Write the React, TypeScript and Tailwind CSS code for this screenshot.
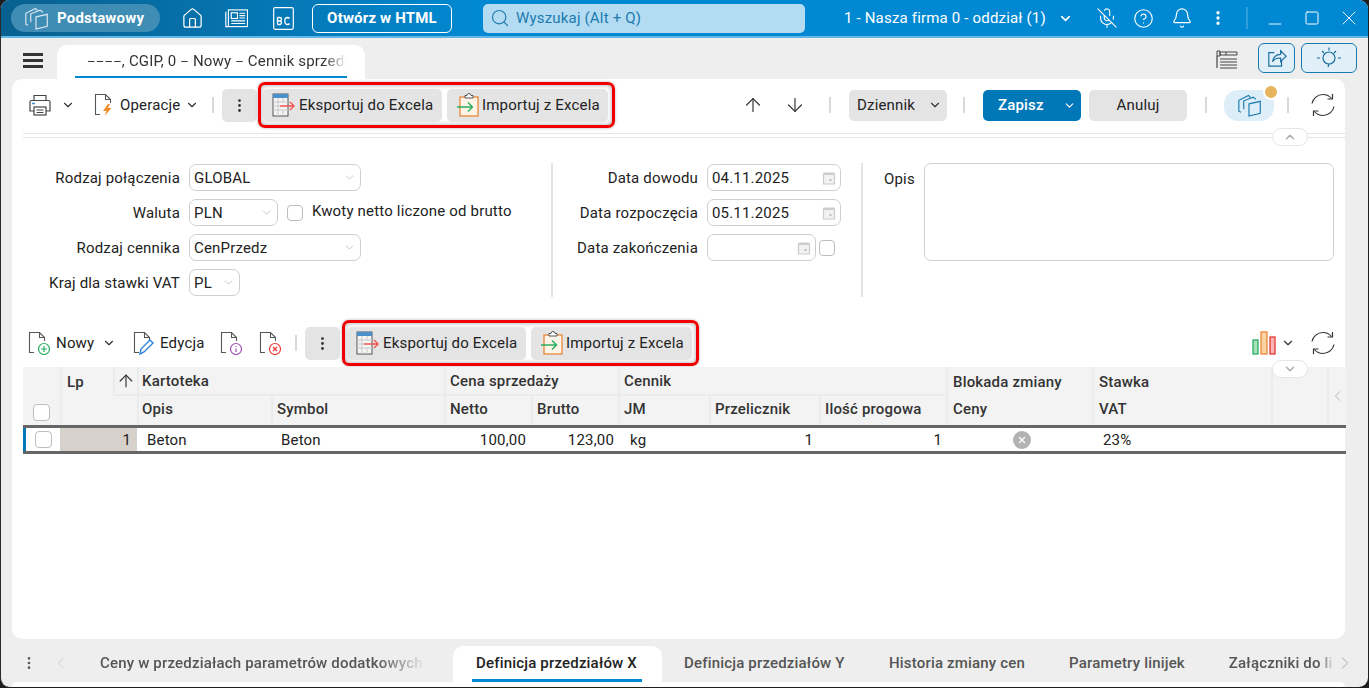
import React from "react";
import { ArrowDown, ArrowUp, Bell, ChevronDown, ChevronLeft, ChevronRight, ChevronUp, CircleHelp, EllipsisVertical, House, MicOff, Minus, Search, Square, X } from "lucide-react";

type IconProps = { className?: string };

// stacked cards icon used in the header pill and the toolbar
function CardsIcon({ className }: IconProps) {
  return (
    <svg viewBox="0 0 22 22" fill="none" stroke="currentColor" strokeWidth="1.1" className={className}>
      <path d="M10.500 9.500L21.300 7v11.500L10.500 21z" />
      <path d="M2.800 17.500L.8 16.500V6L10 1.500l2 2" />
      <path d="M5.500 14.500V6.500L14.500 3l2.500 2" />
    </svg>
  );
}

function NewsIcon() {
  return (
    <svg viewBox="0 0 24 22" fill="none" stroke="white" strokeWidth="1.2" className="h-[21px] w-[23px]">
      <rect x="3.5" y="2" width="20" height="17.5" />
      <path d="M.8 4v15.5h2.7" />
      <rect x="6.5" y="5" width="6.5" height="6" />
      <path d="M15 5.5h6M15 8h6M15 10.5h6M6.5 13.5h14.5M6.5 16.2h14.5" />
    </svg>
  );
}

function BcIcon() {
  return (
    <svg viewBox="0 0 21 23" fill="none" stroke="white" strokeWidth="1.2" className="h-[23px] w-[21px]">
      <rect x=".7" y=".7" width="19.6" height="21.6" rx="1.5" />
      <path d="M4.500 10.500v7M4.500 10.500h2.200a1.700 1.700 0 0 1 0 3.500H4.500M4.500 14h2.600a1.800 1.800 0 0 1 0 3.500H4.500M16.500 11.500a2.600 2.600 0 0 0-1.900-1c-1.600 0-2.800 1.400-2.800 3.500s1.200 3.500 2.800 3.500a2.600 2.600 0 0 0 1.900-1" strokeWidth="1.3" />
    </svg>
  );
}

function PrinterIcon() {
  return (
    <svg viewBox="0 0 24 24" fill="none" stroke="#444" strokeWidth="1.2" className="h-[26px] w-[24px]">
      <path d="M6 8V2.500h12V8" />
      <path d="M6 18H2V9a1.500 1.500 0 0 1 1.500-1.500h17A1.500 1.500 0 0 1 22 9v9h-4" />
      <rect x="6" y="14" width="12" height="8" />
      <path d="M8.500 17h7M8.500 19.500h7" />
      <path d="M4 10.500h3" stroke="#3b8fd0" strokeWidth="1.6" />
    </svg>
  );
}

// document outline with a folded corner, the small part sits bottom right
function DocIcon({ children }: { children: React.ReactNode }) {
  return (
    <svg viewBox="0 0 24 24" fill="none" className="h-[24px] w-[24px]">
      <path d="M7 21.500H2.500V1.500h10l5 5V10M12.500 1.500v5h5" stroke="#555" strokeWidth="1.1" />
      {children}
    </svg>
  );
}

function ExportIcon() {
  return (
    <svg viewBox="0 0 24 24" fill="none" className="h-[24px] w-[24px] shrink-0">
      <rect x="1" y="1" width="15" height="22" fill="#f4f4f4" stroke="#555" />
      <rect x="1" y="1" width="15" height="4" fill="#4b8fcb" />
      <path d="M1 9h15M1 13h7M1 17h15M6 5v18M11 5v4M11 17v6" stroke="#c8c8c8" />
      <path d="M8 13h14M18 9l4 4-4 4" stroke="#ef5350" strokeWidth="1.4" />
    </svg>
  );
}

function ImportIcon() {
  return (
    <svg viewBox="0 0 24 24" fill="none" className="h-[24px] w-[24px] shrink-0">
      <rect x="4" y="4" width="18" height="19" fill="#fdf3e7" stroke="#e8883a" strokeWidth="1.3" />
      <path d="M9 5V2.500h2a2 2 0 0 1 4 0h2V5z" fill="white" stroke="#555" />
      <path d="M1 14h15M12 9.500l4.500 4.500-4.500 4.500" stroke="#27ae60" strokeWidth="1.4" />
    </svg>
  );
}

function RefreshIcon() {
  return (
    <svg viewBox="0 0 24 24" fill="none" stroke="#333" strokeWidth="1.2" className="h-[24px] w-[24px]">
      <path d="M1 10.500C2 5.500 6.500 1.500 12 1.500c3.500 0 6.500 1.500 8.500 4" />
      <path d="M21.500 1v5h-5" />
      <path d="M23 13.500C22 18.500 17.500 22.500 12 22.500c-3.500 0-6.500-1.500-8.500-4" />
      <path d="M2.500 23v-5h5" />
    </svg>
  );
}

function Sep({ className = "" }: IconProps) {
  return <div className={`h-[16px] w-[2px] shrink-0 bg-[#d9d9d9] ${className}`} />;
}

function KebabBtn() {
  return (
    <div className="flex h-[33px] w-[35px] shrink-0 items-center justify-center rounded-[5px] bg-[#e4e4e4]">
      <EllipsisVertical className="h-[17px] w-[17px] text-[#333]" />
    </div>
  );
}

// the two excel actions with the red frame drawn around them in the picture
function ExcelActions({ className = "" }: IconProps) {
  return (
    <div className={`flex h-[46px] w-[357px] shrink-0 items-center gap-[5px] rounded-[7px] border-[3px] border-[#f00000] pl-[2px] shadow-[0_0_3px_rgba(0,0,0,0.3),inset_0_0_5px_rgba(0,0,0,0.35)] ${className}`}>
      <div className="flex h-[33px] w-[179px] items-center gap-[3px] rounded-[5px] bg-[#e4e4e4] pl-[9px]">
        <ExportIcon />
        <span>Eksportuj do Excela</span>
      </div>
      <div className="flex h-[33px] w-[161px] items-center gap-[2px] rounded-[5px] bg-[#e4e4e4] pl-[9px]">
        <ImportIcon />
        <span>Importuj z Excela</span>
      </div>
    </div>
  );
}

function Chevron({ className = "" }: IconProps) {
  return <ChevronDown strokeWidth={2} className={`h-[14px] w-[14px] text-[#333] ${className}`} />;
}

function Select({ value, width }: { value: string; width: string }) {
  return (
    <div className={`flex h-[27px] items-center justify-between rounded-[7px] border border-[#cfcfcf] px-[4px] ${width}`}>
      <span className="pt-[1px]">{value}</span>
      <ChevronDown strokeWidth={1.2} className="h-[13px] w-[13px] text-[#aaa]" />
    </div>
  );
}

function Check({ className = "" }: IconProps) {
  return <div className={`h-[16px] w-[16px] shrink-0 rounded-[4px] border border-[#bdbdbd] bg-white ${className}`} />;
}

function CalendarIcon() {
  return (
    <svg viewBox="0 0 14 14" className="h-[14px] w-[14px]" fill="none">
      <path d="M1.500 3h11v10h-11z" stroke="#ccc" strokeWidth="1.2" fill="#f2f2f2" />
      <path d="M1.500 1.500h11V4h-11z" fill="#ccc" />
      <rect x="7.500" y="8" width="2" height="2" fill="#bbb" />
    </svg>
  );
}

function DateField({ value, width }: { value?: string; width: string }) {
  return (
    <div className={`flex h-[27px] items-center justify-between rounded-[7px] border border-[#cfcfcf] px-[4px] ${width}`}>
      <span className="pt-[1px]">{value}</span>
      <CalendarIcon />
    </div>
  );
}

function Label({ children }: { children: React.ReactNode }) {
  return <span className="whitespace-nowrap pt-[1px] text-right">{children}</span>;
}

function HeadCell({ children, className = "" }: { children?: React.ReactNode; className?: string }) {
  return (
    <div className={`flex items-center border-l-2 border-[#ebebeb] font-medium text-[#333] ${className}`}>
      {children}
    </div>
  );
}

function BodyCell({ children, className = "" }: { children?: React.ReactNode; className?: string }) {
  return <div className={`flex h-[23px] items-center whitespace-nowrap pt-[1px] ${className}`}>{children}</div>;
}

export default function App() {
  return (
    <div className="h-[688px] w-[1369px] overflow-hidden bg-[#1e1e1e]">
      <div className="flex h-[687px] w-[1368px] flex-col overflow-hidden rounded-[9px] border-l border-[#2b2b2b] bg-[#eeeeee] font-['Roboto',sans-serif] text-[15px] tracking-[0.18px] text-[#222]">
        {/* title bar */}
        <header className="flex h-[38px] shrink-0 items-center border-b-2 border-[#62b6e6] bg-gradient-to-r from-[#08608f] to-[#0089d2] to-35% pl-[10px] text-white">
          <div className="flex h-[28px] w-[149px] items-center rounded-full bg-[#3f8db5] pl-[14px]">
            <CardsIcon className="h-[23px] w-[23px] text-[#dbe9f2]" />
            <span className="ml-[9px] font-bold">Podstawowy</span>
          </div>
          <House strokeWidth={1.3} className="ml-[21px] h-[23px] w-[23px]" />
          <div className="ml-[21px]"><NewsIcon /></div>
          <div className="ml-[25px]"><BcIcon /></div>
          <div className="ml-[18px] flex h-[29px] w-[140px] items-center justify-center rounded-[6px] border border-white font-bold">
            Otwórz w HTML
          </div>
          <div className="ml-[31px] flex h-[29px] w-[322px] items-center rounded-[5px] bg-[#b3dcf2] pl-[7px] text-[#1b7ab0]">
            <Search strokeWidth={1.4} className="h-[20px] w-[20px]" />
            <span className="ml-[6px]">Wyszukaj (Alt + Q)</span>
          </div>
          <span className="ml-[39px] w-[201px] whitespace-nowrap">1 - Nasza firma 0 - oddział (1)</span>
          <ChevronDown strokeWidth={2.5} className="ml-[13px] h-[15px] w-[15px]" />
          <MicOff strokeWidth={1.2} className="ml-[23px] h-[22px] w-[22px]" />
          <CircleHelp strokeWidth={1.3} className="ml-[15px] h-[21px] w-[21px]" />
          <Bell strokeWidth={1.3} className="ml-[17px] h-[22px] w-[22px]" />
          <EllipsisVertical strokeWidth={2.4} className="ml-[16px] h-[18px] w-[18px]" />
          <div className="ml-[19px] h-[22px] w-[2px] bg-[#2e9fdc]" />
          <Minus strokeWidth={1.1} className="ml-[17px] mt-[12px] h-[20px] w-[20px]" />
          <Square strokeWidth={1.5} className="ml-[19px] h-[16px] w-[16px]" />
          <X strokeWidth={0.9} className="ml-[17px] h-[24px] w-[24px]" />
        </header>

        {/* document tab row */}
        <div className="flex h-[41px] shrink-0 items-end">
          <div className="mb-[11px] ml-[22px] flex w-[20px] flex-col gap-[3px]">
            <div className="h-[3px] bg-[#333]" />
            <div className="h-[3px] bg-[#333]" />
            <div className="h-[3px] bg-[#333]" />
          </div>
          <div className="ml-[14px] flex h-[34px] w-[308px] flex-col rounded-t-[10px] bg-white pl-[18px]">
            <div className="h-[31px] w-[272px] overflow-hidden whitespace-nowrap pl-[12px] pt-[5px] text-[#333] [mask-image:linear-gradient(to_left,transparent,black_24px)]">
              <span className="text-[13px]">––––</span>, CGIP, 0 <span className="text-[13px]">–</span> Nowy <span className="text-[13px]">–</span> Cennik sprzedaży
            </div>
            <div className="h-[2px] w-[272px] bg-[#0089d2]" />
          </div>
          <div className="mb-[6px] ml-auto flex items-center">
            <svg viewBox="0 0 22 20" fill="none" stroke="#444" className="mb-[-3px] h-[20px] w-[22px]">
              <path d="M1 1h3v5H1zM4 2h17v3H4zM10 2v3" />
              <path d="M4 9h17M4 12h17M4 15h17M4 18h17M1 6v12" strokeWidth="1.2" />
            </svg>
            <div className="ml-[20px] flex h-[30px] w-[37px] items-center justify-center rounded-[6px] border border-[#1a7ab0] bg-[#e0eff8]">
              <svg viewBox="0 0 22 22" fill="none" stroke="#1a6f9f" strokeWidth="1.3" className="h-[20px] w-[20px]">
                <path d="M8 5H2v15h14v-6" />
                <path d="M6 15c1-5 4-8 9-8V3l6 6-6 6v-4c-4 0-7 1-9 4z" />
              </svg>
            </div>
            <div className="ml-[6px] mr-[11px] flex h-[30px] w-[56px] items-center justify-center rounded-[6px] border border-[#1a7ab0] bg-[#e0eff8]">
              <svg viewBox="0 0 26 24" fill="none" stroke="#1a6f9f" strokeWidth="1.2" className="h-[24px] w-[26px]">
                <circle cx="13" cy="12" r="6" />
                <path d="M13 18l-1 3M13 1.500v3M4 12H1M25 12h-3M6 5l2 2M20 5l-2 2" />
              </svg>
            </div>
          </div>
        </div>

        {/* main card */}
        <main className="relative ml-[11px] flex h-[560px] w-[1333px] shrink-0 flex-col rounded-[10px] bg-white pl-[11px]">
          <div className="flex h-[54px] shrink-0 items-center pb-[2px]">
            <div className="ml-[5px]"><PrinterIcon /></div>
            <Chevron className="ml-[9px]" />
            <div className="ml-[18px]">
              <DocIcon>
                <path d="M15 11l-5 7h3.500l-2 5 7-8h-3.500l2-4z" fill="#f28c28" />
              </DocIcon>
            </div>
            <span className="ml-[3px] w-[60px]">Operacje</span>
            <Chevron className="ml-[5px]" />
            <Sep className="ml-[13px]" />
            <div className="ml-[8px]"><KebabBtn /></div>
            <ExcelActions className="ml-[1px]" />
            <ArrowUp strokeWidth={1.3} className="ml-[127px] h-[22px] w-[22px] text-[#333]" />
            <ArrowDown strokeWidth={1.3} className="ml-[20px] h-[22px] w-[22px] text-[#333]" />
            <Sep className="ml-[23px]" />
            <div className="ml-[18px] flex h-[31px] w-[98px] items-center justify-between rounded-[5px] bg-[#e4e4e4] pl-[8px] pr-[5px]">
              <span>Dziennik</span>
              <Chevron />
            </div>
            <Sep className="ml-[16px]" />
            <div className="ml-[18px] flex h-[31px] w-[98px] items-center justify-between rounded-[5px] bg-[#0077b6] pl-[15px] pr-[5px] font-medium text-white">
              <span>Zapisz</span>
              <ChevronDown strokeWidth={2} className="h-[13px] w-[13px]" />
            </div>
            <div className="ml-[8px] flex h-[31px] w-[98px] items-center justify-center rounded-[5px] bg-[#e4e4e4]">Anuluj</div>
            <Sep className="ml-[18px]" />
            <div className="relative ml-[17px] flex h-[31px] w-[50px] items-center justify-center rounded-[14px] bg-[#deeef8]">
              <CardsIcon className="h-[23px] w-[23px] text-[#1a7ab0]" />
              <div className="absolute right-[-5px] top-[-6px] box-content h-[12px] w-[12px] rounded-full border-2 border-white bg-[#e5b45c]" />
            </div>
            <Sep className="ml-[13px]" />
            <div className="ml-[22px]"><RefreshIcon /></div>
          </div>

          {/* collapse bar */}
          <div className="relative mr-[-1px] h-[5px] shrink-0 border-y border-[#e6e6e6]">
            <div className="absolute left-[1249px] top-[-6px] flex h-[18px] w-[36px] items-center justify-center rounded-full border border-[#e6e6e6] bg-white">
              <ChevronUp strokeWidth={2.4} className="h-[14px] w-[14px] text-[#aaa]" />
            </div>
          </div>

          {/* form */}
          <div className="mt-[25px] flex h-[134px] shrink-0">
            <div className="w-[530px] border-r-2 border-[#e4e4e4] pt-[1px]">
              <div className="grid grid-cols-[157px_auto] items-center justify-start gap-x-[9px] gap-y-[8px]">
                <Label>Rodzaj połączenia</Label>
                <Select value="GLOBAL" width="w-[172px]" />
                <Label>Waluta</Label>
                <div className="flex items-center">
                  <Select value="PLN" width="w-[89px]" />
                  <Check className="ml-[9px]" />
                  <span className="ml-[9px] -mt-[2px] whitespace-nowrap">Kwoty netto liczone od brutto</span>
                </div>
                <Label>Rodzaj cennika</Label>
                <Select value="CenPrzedz" width="w-[172px]" />
                <Label>Kraj dla stawki VAT</Label>
                <Select value="PL" width="w-[51px]" />
              </div>
            </div>
            <div className="w-[310px] border-r-2 border-[#e4e4e4] pt-[1px]">
              <div className="grid grid-cols-[145px_auto] items-center justify-start gap-x-[9px] gap-y-[8px]">
                <Label>Data dowodu</Label>
                <DateField value="04.11.2025" width="w-[134px]" />
                <Label>Data rozpoczęcia</Label>
                <DateField value="05.11.2025" width="w-[134px]" />
                <Label>Data zakończenia</Label>
                <div className="flex items-center gap-[3px]">
                  <DateField width="w-[109px]" />
                  <Check />
                </div>
              </div>
            </div>
            <div className="ml-[21px] flex">
              <span className="mt-[5px] w-[31px]">Opis</span>
              <div className="ml-[9px] h-[98px] w-[410px] rounded-[7px] border border-[#cfcfcf]" />
            </div>
          </div>

          {/* grid toolbar */}
          <div className="mt-[23px] flex h-[46px] shrink-0 items-center">
            <div className="ml-[4px]">
              <DocIcon>
                <circle cx="17" cy="18" r="5.500" stroke="#27ae60" strokeWidth="1.2" fill="white" />
                <path d="M14 18h6M17 15v6" stroke="#27ae60" strokeWidth="1.2" />
              </DocIcon>
            </div>
            <span className="ml-[5px] w-[38px]">Nowy</span>
            <Chevron className="ml-[8px]" />
            <div className="ml-[16px]">
              <DocIcon>
                <path d="M8 23l1-5 9-9 3 3-9 9z" stroke="#2b82d9" strokeWidth="1.4" fill="white" />
              </DocIcon>
            </div>
            <span className="ml-[4px] w-[44px]">Edycja</span>
            <div className="ml-[15px]">
              <DocIcon>
                <circle cx="17" cy="18" r="5.500" stroke="#a34fb5" strokeWidth="1.2" fill="white" />
                <path d="M17 17.500v3.500M17 15v1" stroke="#a34fb5" strokeWidth="1.2" />
              </DocIcon>
            </div>
            <div className="ml-[15px]">
              <DocIcon>
                <circle cx="17" cy="18" r="5.500" stroke="#e53935" strokeWidth="1.2" fill="white" />
                <path d="M15 16l4 4M19 16l-4 4" stroke="#e53935" strokeWidth="1.2" />
              </DocIcon>
            </div>
            <Sep className="ml-[13px]" />
            <div className="ml-[8px]"><KebabBtn /></div>
            <ExcelActions className="ml-[2px]" />
            <svg viewBox="0 0 24 24" className="ml-[553px] h-[24px] w-[24px]" fill="none" strokeWidth="1.300">
              <rect x="1" y="9" width="5" height="14" fill="#a8e0bb" stroke="#27ae60" />
              <rect x="9" y="1" width="6" height="22" fill="#fbd2a4" stroke="#e8883a" />
              <rect x="18" y="6" width="5" height="17" fill="#f9b4b4" stroke="#e53935" />
            </svg>
            <Chevron className="ml-[5px] h-[12px] w-[12px]" />
            <div className="ml-[16px]"><RefreshIcon /></div>
          </div>

          {/* grid */}
          <div className="relative mt-[1px] w-[1323px] shrink-0">
            <div className="absolute left-[1249px] top-[-7px] z-10 flex h-[18px] w-[36px] items-center justify-center rounded-full border border-[#e6e6e6] bg-white">
              <ChevronDown strokeWidth={2.4} className="h-[14px] w-[14px] text-[#aaa]" />
            </div>
            <div className="grid h-[58px] grid-cols-[37px_53px_24px_134px_173px_87px_87px_91px_110px_127px_146px_179px_56px_19px] grid-rows-[29px_29px] bg-[#f3f3f3]">
              <HeadCell className="col-start-1 row-span-2 row-start-1 items-end justify-center !border-l-0 pb-[4px]"><Check className="h-[17px] w-[17px]" /></HeadCell>
              <HeadCell className="col-start-2 row-start-1 pl-[5px] pt-[2px]">Lp</HeadCell>
              <HeadCell className="col-start-3 row-start-1 justify-center border-b-2"><ArrowUp strokeWidth={1.4} className="h-[20px] w-[20px]" /></HeadCell>
              <HeadCell className="col-span-2 col-start-4 row-start-1 border-b-2 pl-[3px] pt-[2px]">Kartoteka</HeadCell>
              <HeadCell className="col-span-2 col-start-6 row-start-1 border-b-2 pl-[4px] pt-[2px]">Cena sprzedaży</HeadCell>
              <HeadCell className="col-span-3 col-start-8 row-start-1 border-b-2 pl-[4px] pt-[2px]">Cennik</HeadCell>
              <HeadCell className="col-start-11 row-start-1 pl-[5px] pt-[2px]">Blokada zmiany</HeadCell>
              <HeadCell className="col-start-12 row-start-1 pl-[5px] pt-[2px]">Stawka</HeadCell>
              <HeadCell className="col-start-13 row-span-2 row-start-1" />
              <HeadCell className="col-start-14 row-span-2 row-start-1 justify-center">
                <ChevronLeft strokeWidth={1.2} className="h-[20px] w-[20px] text-[#aaa]" />
              </HeadCell>
              <HeadCell className="col-span-2 col-start-2 row-start-2" />
              <HeadCell className="col-start-4 row-start-2 pb-[2px] pl-[3px]">Opis</HeadCell>
              <HeadCell className="col-start-5 row-start-2 pb-[2px] pl-[4px]">Symbol</HeadCell>
              <HeadCell className="col-start-6 row-start-2 pb-[2px] pl-[4px]">Netto</HeadCell>
              <HeadCell className="col-start-7 row-start-2 pb-[2px] pl-[4px]">Brutto</HeadCell>
              <HeadCell className="col-start-8 row-start-2 pb-[2px] pl-[4px]">JM</HeadCell>
              <HeadCell className="col-start-9 row-start-2 pb-[2px] pl-[4px]">Przelicznik</HeadCell>
              <HeadCell className="col-start-10 row-start-2 whitespace-nowrap pb-[2px] pl-[4px]">Ilość progowa</HeadCell>
              <HeadCell className="col-start-11 row-start-2 pb-[2px] pl-[5px]">Ceny</HeadCell>
              <HeadCell className="col-start-12 row-start-2 pb-[2px] pl-[5px]">VAT</HeadCell>
            </div>
            <div className="grid h-[29px] grid-cols-[37px_77px_134px_173px_87px_87px_91px_110px_127px_146px_179px_75px] border-y-[3px] border-[#666666]">
              <BodyCell className="justify-center border-l-[3px] border-[#0077b6] !pt-0"><Check className="h-[17px] w-[17px]" /></BodyCell>
              <BodyCell className="justify-end bg-[#d6d1cb] pr-[6px]">1</BodyCell>
              <BodyCell className="pl-[10px]">Beton</BodyCell>
              <BodyCell className="pl-[10px]">Beton</BodyCell>
              <BodyCell className="justify-end pr-[5px]">100,00</BodyCell>
              <BodyCell className="justify-end pr-[4px]">123,00</BodyCell>
              <BodyCell className="pl-[12px]">kg</BodyCell>
              <BodyCell className="justify-end pr-[6px]">1</BodyCell>
              <BodyCell className="justify-end pr-[4px]">1</BodyCell>
              <BodyCell className="justify-center pl-[6px] !pt-0">
                <div className="flex h-[18px] w-[18px] items-center justify-center rounded-full bg-[#b3b3b3]">
                  <X strokeWidth={3} className="h-[10px] w-[10px] text-white" />
                </div>
              </BodyCell>
              <BodyCell className="pl-[11px]">23%</BodyCell>
              <BodyCell />
            </div>
          </div>
        </main>

        {/* bottom tabs */}
        <div className="flex h-[43px] shrink-0 items-end font-medium text-[#555]">
          <div className="mb-[9px] ml-[20px] flex items-center">
            <EllipsisVertical strokeWidth={2} className="h-[16px] w-[16px]" />
            <ChevronLeft strokeWidth={1} className="ml-[14px] h-[20px] w-[20px] text-[#ccc]" />
          </div>
          <span className="mb-[8px] ml-[29px] w-[326px] overflow-hidden whitespace-nowrap [mask-image:linear-gradient(to_left,transparent,black_50px)]">
            Ceny w przedziałach parametrów dodatkowych
          </span>
          <div className="ml-[27px] flex h-[36px] w-[209px] flex-col items-center rounded-t-[10px] bg-white pr-[2px] text-[#222]">
            <span className="flex h-[33px] items-center whitespace-nowrap pt-[2px]">Definicja przedziałów X</span>
            <div className="h-[3px] w-[170px] bg-[#0089d2]" />
          </div>
          <span className="mb-[8px] ml-[22px] w-[158px] whitespace-nowrap">Definicja przedziałów Y</span>
          <span className="mb-[8px] ml-[47px] whitespace-nowrap">Historia zmiany cen</span>
          <span className="mb-[8px] ml-[44px] whitespace-nowrap">Parametry linijek</span>
          <span className="mb-[8px] ml-[44px] w-[105px] overflow-hidden whitespace-nowrap [mask-image:linear-gradient(to_left,transparent,black_14px)]">Załączniki do linijek</span>
          <ChevronRight strokeWidth={1} className="mb-[9px] ml-[1px] h-[20px] w-[20px] text-[#999]" />
        </div>
        <div className="ml-[11px] h-[5px] w-[1333px] rounded-t-[8px] bg-white" />
      </div>
    </div>
  );
}
